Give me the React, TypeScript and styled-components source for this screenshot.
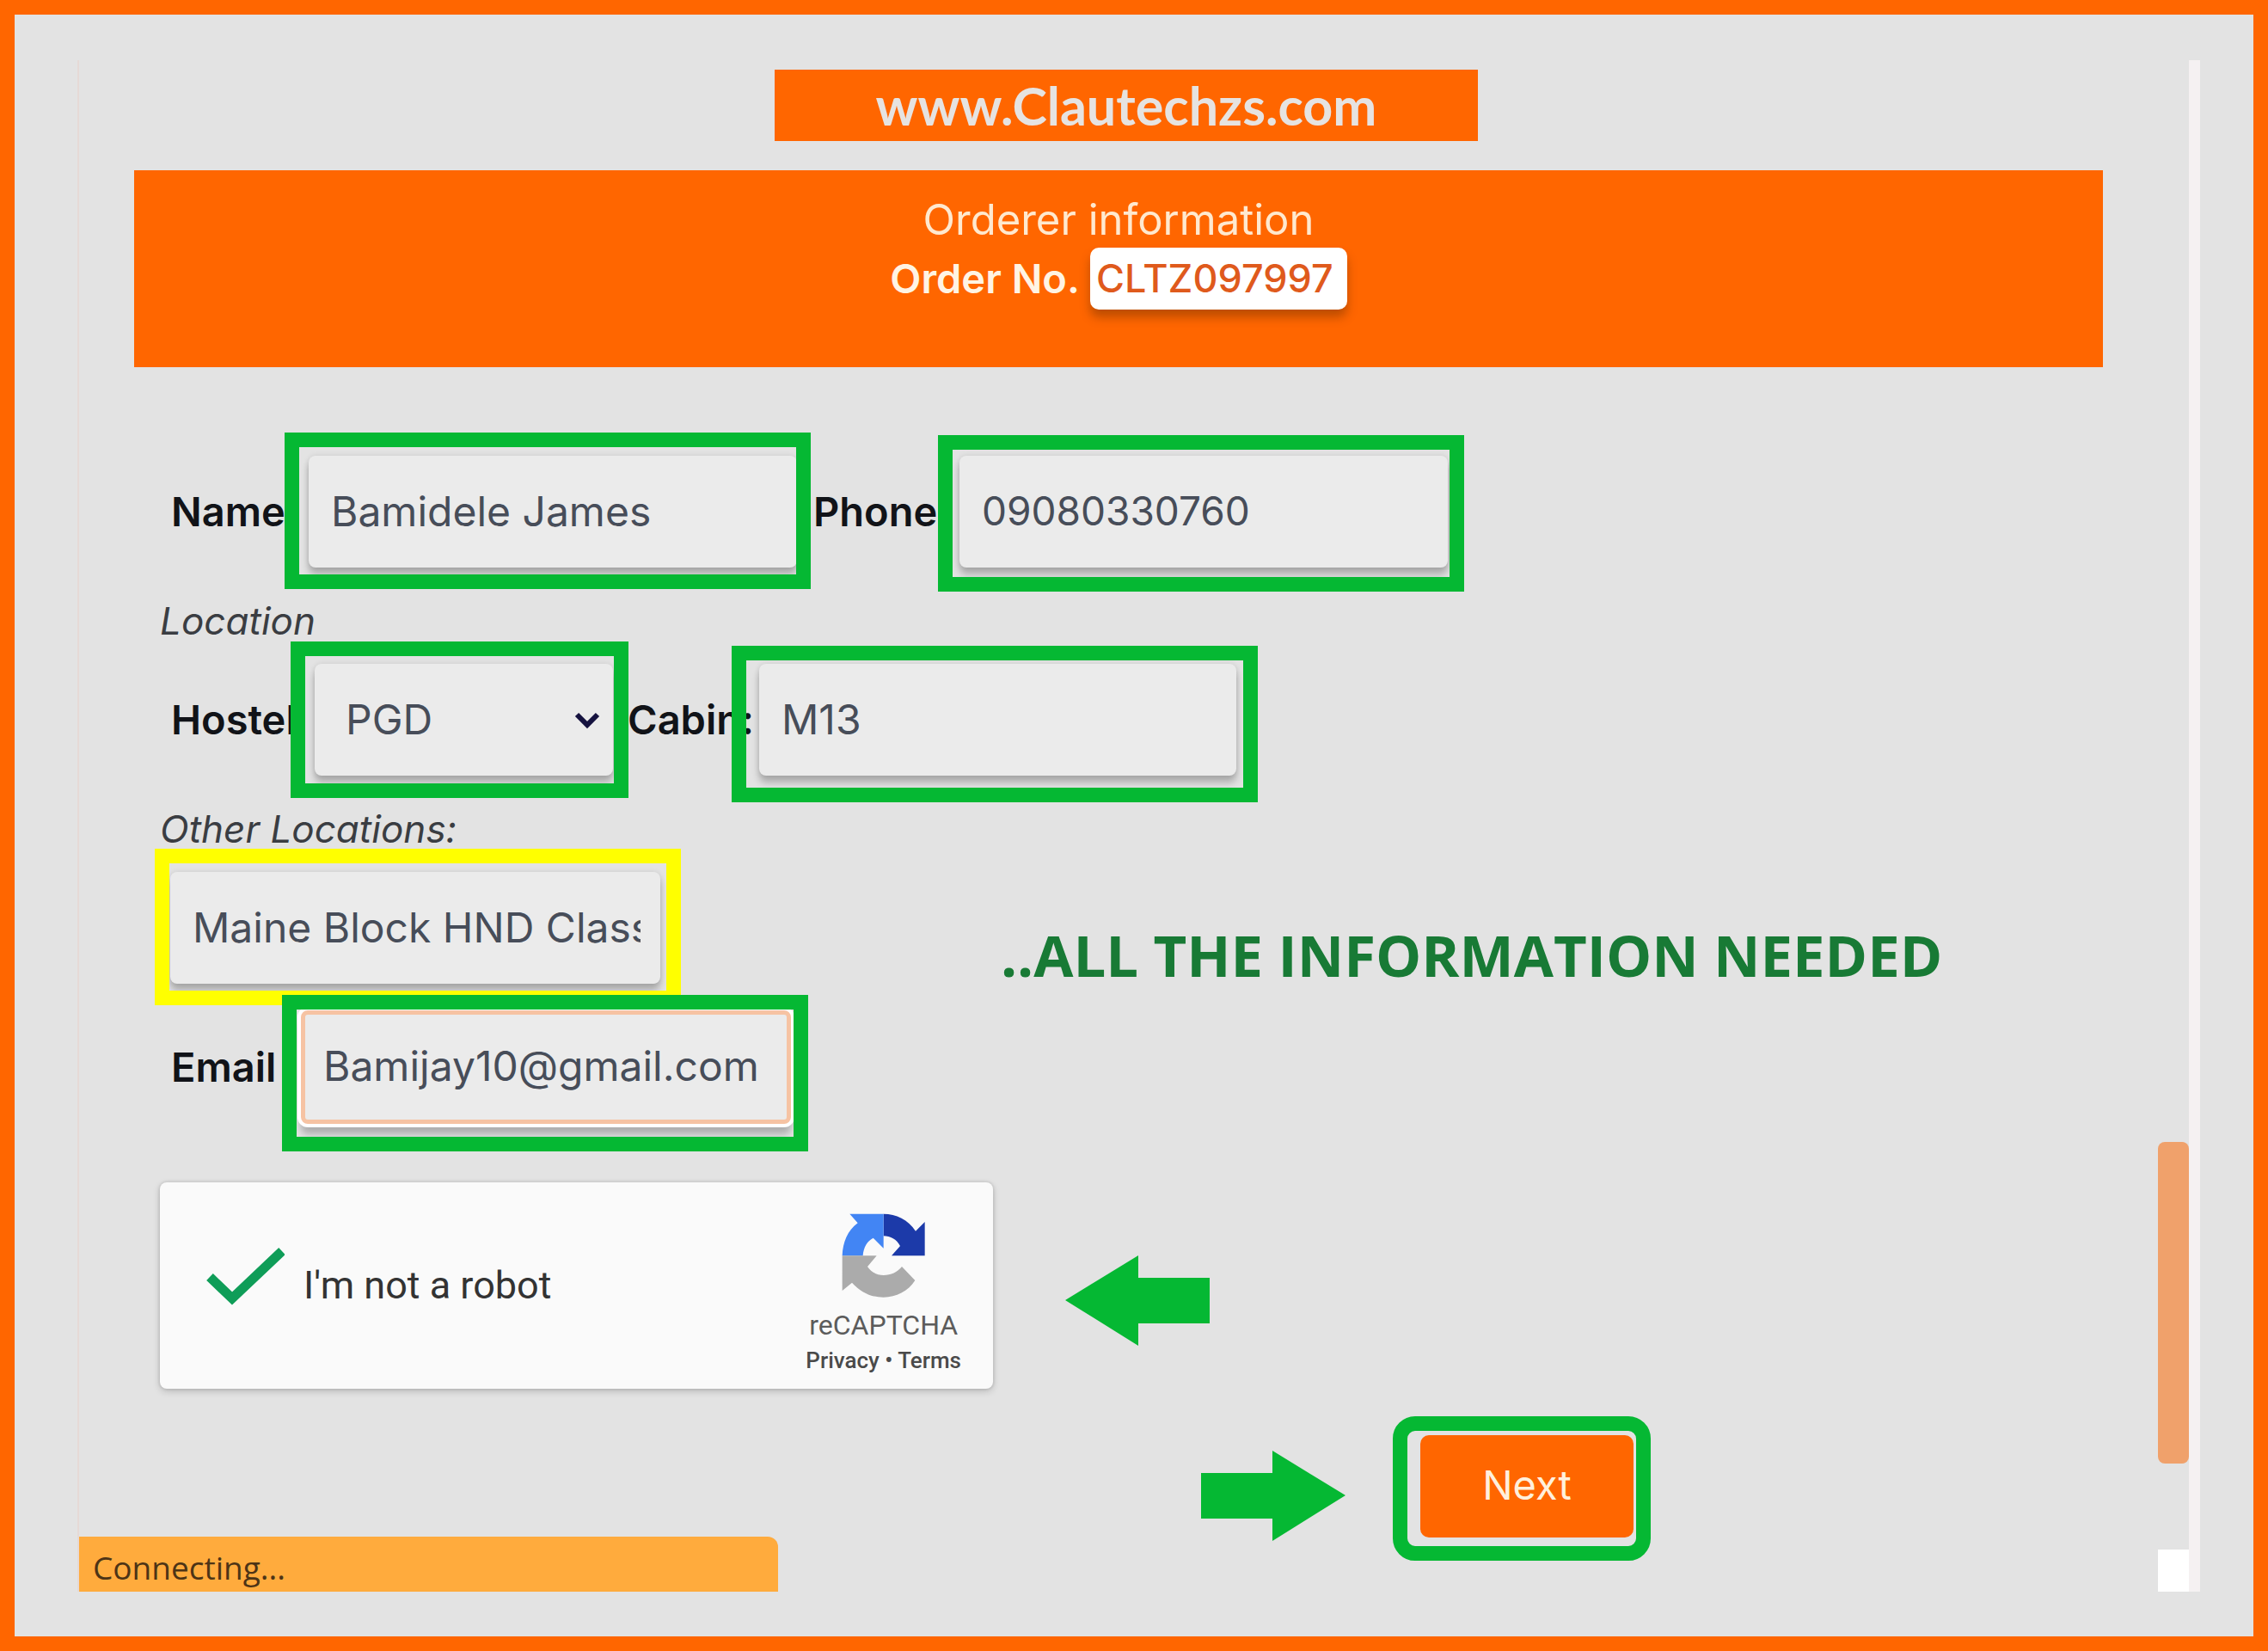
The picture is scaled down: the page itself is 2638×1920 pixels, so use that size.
import React from "react";
import styled, { createGlobalStyle, css } from "styled-components";

const orange = "#ff6600";
const green = "#05b833";
const page = "#e3e3e3";
const uiFont = `Inter, "Open Sans", sans-serif`;

const Global = createGlobalStyle`
  *, *::before, *::after { box-sizing: border-box; }
  html, body { margin: 0; }
  body { background: ${page}; font-family: ${uiFont}; }
`;

const Frame = styled.div`
  min-height: 100vh;
  display: flex;
  border: 17px solid ${orange};
  background: ${page};
  padding: 53px 62px 52px 73px;
`;

const Browser = styled.div`
  position: relative;
  flex: 1;
  min-width: 0;
  display: flex;
  border-left: 2px solid #e6dad6;
`;

const Content = styled.main`
  flex: 1;
  min-width: 0;
  padding: 11px 64px 0 64px;
`;

const ScrollTrack = styled.div`
  width: 36px;
  display: flex;
  flex-direction: column;
  justify-content: flex-end;
`;

const ScrollThumb = styled.div`
  height: 374px;
  margin-bottom: 100px;
  border-radius: 8px;
  background: #f0a16b;
`;

const ScrollCorner = styled.div`
  height: 49px;
  background: #fff;
`;

const WindowEdge = styled.div`
  width: 13px;
  background: #f5f1f2;
`;

const SiteBar = styled.header`
  display: flex;
  justify-content: center;
  padding-left: 18px;
`;

const SiteName = styled.a`
  width: 818px;
  height: 83px;
  background: ${orange};
  color: #e6e3e1;
  font-family: Lato, sans-serif;
  font-size: 61px;
  font-weight: 700;
  line-height: 83px;
  text-align: center;
  text-decoration: none;
`;

const OrderCard = styled.section`
  height: 229px;
  margin-top: 34px;
  padding-top: 28px;
  background: ${orange};
  text-align: center;
`;

const CardTitle = styled.h1`
  margin: 0;
  color: #ffe9cf;
  font-size: 49px;
  font-weight: 400;
  line-height: 60px;
`;

const OrderLine = styled.p`
  display: flex;
  justify-content: center;
  align-items: center;
  gap: 12px;
  margin: 2px 0 0;
  color: #fff4e4;
  font-size: 47px;
  font-weight: 600;
  line-height: 72px;
`;

const OrderChip = styled.span`
  height: 72px;
  padding: 0 16px 0 7px;
  border-radius: 10px;
  background: #fff;
  color: #df5a1c;
  font-size: 45px;
  font-weight: 500;
  box-shadow: 0 9px 12px rgba(90, 40, 0, 0.4);
`;

const Form = styled.form`
  display: flex;
  flex-direction: column;
  align-items: flex-start;
  margin-top: 103px;
  padding-left: 30px;
`;

const Row = styled.div<{ $indent?: number; $top?: number }>`
  display: flex;
  align-items: center;
  margin-top: ${(p) => p.$top ?? 0}px;
  padding-left: ${(p) => p.$indent ?? 0}px;
`;

const Label = styled.label<{ $width: number }>`
  width: ${(p) => p.$width}px;
  color: #111318;
  font-size: 47px;
  font-weight: 600;
  line-height: 56px;
  white-space: nowrap;
`;

const GroupLabel = styled.label`
  margin: 34px 0 22px;
  color: #3a3d42;
  font-size: 44px;
  font-style: italic;
  line-height: 56px;
`;

const Control = styled.div<{ $width: number; $after?: number }>`
  position: relative;
  width: ${(p) => p.$width}px;
  margin-right: ${(p) => p.$after ?? 0}px;
`;

const fieldStyle = css`
  display: block;
  width: 100%;
  height: 130px;
  border: 0;
  border-radius: 8px;
  outline: 0;
  background: #ebebeb;
  color: #474d59;
  font-family: ${uiFont};
  font-size: 48px;
  font-weight: 400;
  box-shadow: 0 8px 8px rgba(0, 0, 0, 0.24), 0 0 6px rgba(0, 0, 0, 0.1);
`;

const Field = styled.input<{ $focused?: boolean }>`
  ${fieldStyle}
  padding: 0 23px 2px 26px;

  &[inputmode="numeric"] {
    font-size: 46px;
  }

  ${(p) =>
    p.$focused &&
    css`
      height: 132px;
      padding: 0 18px 3px 21px;
      border: 5px solid #f6c3a3;
      box-shadow: 0 0 0 4px #fff, 0 12px 8px rgba(0, 0, 0, 0.24);
    `}
`;

const Picker = styled.select`
  ${fieldStyle}
  appearance: none;
  padding: 0 60px 2px 36px;
`;

const Chevron = styled.svg`
  position: absolute;
  right: 14px;
  top: 54px;
  width: 32px;
  height: 24px;
  pointer-events: none;
`;

/* Tutorial outline drawn over a control, free to cover the text beside it. */
const Mark = styled.span<{ $x: number; $y: number; $w: number; $color?: string }>`
  position: absolute;
  z-index: 1;
  left: ${(p) => p.$x}px;
  top: ${(p) => p.$y}px;
  width: ${(p) => p.$w}px;
  height: 182px;
  border: 17px solid ${(p) => p.$color ?? green};
  pointer-events: none;
`;

const Headline = styled.p`
  align-self: flex-end;
  margin: 0 0 2px 396px;
  color: #187a35;
  font-family: "Open Sans", "Noto Sans", sans-serif;
  font-size: 67px;
  font-weight: 700;
  line-height: 64px;
  white-space: nowrap;
`;

const CaptchaRow = styled.div`
  display: flex;
  align-items: flex-start;
  gap: 84px;
  margin-top: 68px;
`;

const Captcha = styled.div`
  width: 969px;
  height: 240px;
  display: flex;
  justify-content: space-between;
  padding: 36px 37px 0 54px;
  border-radius: 8px;
  background: #fafafa;
  font-family: Roboto, sans-serif;
  box-shadow: 0 3px 8px rgba(0, 0, 0, 0.18), 0 0 2px 2px #d6d6d6;
`;

const CaptchaCheck = styled.label`
  display: grid;
  grid-template-columns: 91px auto;
  column-gap: 22px;
  align-items: center;
  align-self: flex-start;
  margin-top: 30px;
  color: #333;
  font-size: 45px;
  line-height: 68px;
`;

const CheckBox = styled.input`
  grid-area: 1 / 1;
  appearance: none;
  width: 91px;
  height: 68px;
  margin: 0;
`;

const Tick = styled.svg`
  grid-area: 1 / 1;
  width: 91px;
  height: 68px;
  pointer-events: none;
`;

const CheckText = styled.span`
  padding-top: 20px;
`;

const Brand = styled.div`
  display: flex;
  flex-direction: column;
  align-items: center;
`;

const BrandLogo = styled.svg`
  width: 98px;
  height: 98px;
`;

const BrandName = styled.span`
  margin-top: 12px;
  color: #5c5c5c;
  font-size: 32px;
  line-height: 40px;
`;

const BrandLinks = styled.span`
  color: #4a4a4a;
  font-size: 26px;
  font-weight: 500;
  line-height: 42px;

  a {
    color: inherit;
    text-decoration: none;
  }
`;

const Arrow = styled.svg<{ $top: number }>`
  width: 168px;
  height: 105px;
  margin-top: ${(p) => p.$top}px;
`;

const Actions = styled.div`
  display: flex;
  align-items: flex-start;
  gap: 55px;
  margin-top: 32px;
  padding-left: 1211px;
`;

const NextOutline = styled.div`
  width: 300px;
  height: 168px;
  padding: 5px 3px 10px 15px;
  border: 17px solid ${green};
  border-radius: 26px;
`;

const NextButton = styled.button`
  width: 100%;
  height: 100%;
  padding: 0 0 4px;
  border: 0;
  border-radius: 10px;
  background: ${orange};
  color: #fff0dc;
  font-family: ${uiFont};
  font-size: 47px;
`;

const StatusBubble = styled.div`
  position: absolute;
  left: 0;
  bottom: 0;
  width: 813px;
  height: 64px;
  padding: 4px 16px 0;
  border-radius: 0 12px 0 0;
  background: #ffab3d;
  color: #4d3416;
  font-family: "Open Sans", sans-serif;
  font-size: 37px;
  line-height: 64px;
`;

export default function App() {
  return (
    <>
      <Global />
      <Frame>
        <Browser>
          <Content>
            <SiteBar>
              <SiteName href="#">www.Clautechzs.com</SiteName>
            </SiteBar>
            <OrderCard>
              <CardTitle>Orderer information</CardTitle>
              <OrderLine>
                <span>Order No.</span>
                <OrderChip>CLTZ097997</OrderChip>
              </OrderLine>
            </OrderCard>

            <Form onSubmit={(e) => e.preventDefault()}>
              <Row $indent={13}>
                <Label htmlFor="name" $width={160}>Name</Label>
                <Control $width={568} $after={19}>
                  <Field id="name" defaultValue="Bamidele James" />
                  <Mark $x={-28} $y={-27} $w={612} />
                </Control>
                <Label htmlFor="phone" $width={170}>Phone</Label>
                <Control $width={568}>
                  <Field id="phone" type="tel" inputMode="numeric" defaultValue="09080330760" />
                  <Mark $x={-25} $y={-24} $w={612} />
                </Control>
              </Row>

              <GroupLabel as="div">Location</GroupLabel>
              <Row $indent={13}>
                <Label htmlFor="hostel" $width={167}>Hostel</Label>
                <Control $width={347} $after={17}>
                  <Picker id="hostel" defaultValue="PGD">
                    <option>PGD</option>
                  </Picker>
                  <Chevron viewBox="0 0 32 24" aria-hidden="true">
                    <path d="M4 5l12 12L28 5" fill="none" stroke="#15123f" strokeWidth="6" />
                  </Chevron>
                  <Mark $x={-28} $y={-26} $w={393} />
                </Control>
                <Label htmlFor="cabin" $width={153}>Cabin:</Label>
                <Control $width={555}>
                  <Field id="cabin" defaultValue="M13" />
                  <Mark $x={-32} $y={-21} $w={612} />
                </Control>
              </Row>

              <GroupLabel htmlFor="other">Other Locations:</GroupLabel>
              <Row $indent={12}>
                <Control $width={570}>
                  <Field id="other" defaultValue="Maine Block HND Class" />
                  <Mark $x={-18} $y={-27} $w={612} $color="#ffff00" />
                </Control>
                <Headline>..ALL THE INFORMATION NEEDED</Headline>
              </Row>

              <Row $indent={13} $top={31}>
                <Label htmlFor="email" $width={151}>Email</Label>
                <Control $width={570}>
                  <Field id="email" type="email" $focused defaultValue="Bamijay10@gmail.com" />
                  <Mark $x={-22} $y={-18} $w={612} />
                </Control>
              </Row>

              <CaptchaRow>
                <Captcha>
                  <CaptchaCheck>
                    <CheckBox type="checkbox" defaultChecked />
                    <Tick viewBox="0 0 91 68" aria-hidden="true">
                      <path d="M4 34L30 59L88 4" fill="none" stroke="#0f9d58" strokeWidth="11" />
                    </Tick>
                    <CheckText>I'm not a robot</CheckText>
                  </CaptchaCheck>
                  <Brand>
                    <BrandLogo viewBox="180 64 294 294" aria-hidden="true">
                      <path
                        fill="#1c3aa9"
                        d="M326 66C370 66 412 86 438 126L470 94V212H354L384 178C372 155 350 143 326 143Z"
                      />
                      <path
                        fill="#4285f4"
                        d="M208 66H326V186L290 150C270 160 256 182 254 212H182C184 165 200 125 236 98Z"
                      />
                      <path
                        fill="#ababab"
                        d="M182 212H302L270 250C284 270 304 280 326 280C352 280 374 270 390 250L436 298C412 336 370 357 326 357C284 357 246 340 216 306L182 334Z"
                      />
                    </BrandLogo>
                    <BrandName>reCAPTCHA</BrandName>
                    <BrandLinks>
                      <a href="#">Privacy</a> • <a href="#">Terms</a>
                    </BrandLinks>
                  </Brand>
                </Captcha>
                <Arrow $top={85} viewBox="0 0 168 105" aria-hidden="true">
                  <path d="M0 52L85 0V26H168V79H85V105Z" fill={green} />
                </Arrow>
              </CaptchaRow>

              <Actions>
                <Arrow $top={40} viewBox="0 0 168 105" aria-hidden="true">
                  <path d="M168 52L83 0V26H0V79H83V105Z" fill={green} />
                </Arrow>
                <NextOutline>
                  <NextButton type="submit">Next</NextButton>
                </NextOutline>
              </Actions>
            </Form>
          </Content>
          <ScrollTrack>
            <ScrollThumb />
            <ScrollCorner />
          </ScrollTrack>
          <WindowEdge />
          <StatusBubble role="status">Connecting...</StatusBubble>
        </Browser>
      </Frame>
    </>
  );
}
